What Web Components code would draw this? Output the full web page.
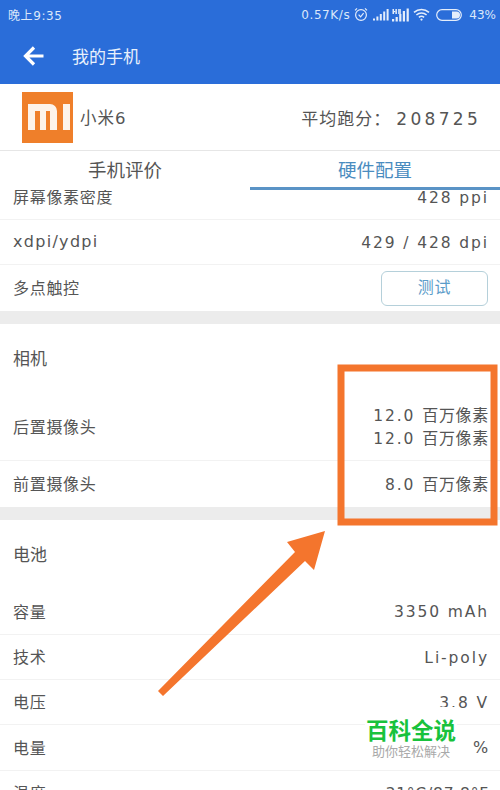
<!DOCTYPE html>
<html lang="zh">
<head>
<meta charset="utf-8">
<title>我的手机</title>
<style>
  html, body { margin: 0; padding: 0; background: #fff; }
  body { width: 500px; height: 790px; overflow: hidden; font-family: "DejaVu Sans", "Noto Sans CJK SC", sans-serif; color: #555; }
</style>
</head>
<body>
<phone-screen>
  <status-bar></status-bar>
  <app-bar>我的手机</app-bar>
  <device-head name="小米6" score="平均跑分&#xFF1A;" points="208725"></device-head>
  <tab-bar first="手机评价" second="硬件配置"></tab-bar>
  <spec-list>
    <spec-row style="height:45px;margin-top:-15px" label="屏幕像素密度"><wide-num>428 ppi</wide-num></spec-row>
    <spec-row style="height:45px" label="xdpi/ydpi" latin><wide-num>429 / 428 dpi</wide-num></spec-row>
    <spec-row style="height:46px" label="多点触控" plain><test-button>测试</test-button></spec-row>
    <spec-gap></spec-gap>
    <spec-title>相机</spec-title>
    <spec-row style="height:68px" label="后置摄像头"><wide-num>12.0 </wide-num>百万像素<br><wide-num>12.0 </wide-num>百万像素</spec-row>
    <spec-row style="height:46px" label="前置摄像头" plain><wide-num>8.0 </wide-num>百万像素</spec-row>
    <spec-gap></spec-gap>
    <spec-title>电池</spec-title>
    <spec-row style="height:46px" label="容量"><wide-num>3350 mAh</wide-num></spec-row>
    <spec-row style="height:45px" label="技术"><wide-num>Li-poly</wide-num></spec-row>
    <spec-row style="height:45px" label="电压"><wide-num>3.8 V</wide-num></spec-row>
    <spec-row style="height:46px" label="电量">%</spec-row>
    <spec-row style="height:45px" label="温度"><wide-num style="letter-spacing:.8px">31°C/87.8°F</wide-num></spec-row>
  </spec-list>
  <photo-annotation></photo-annotation>
  <brand-mark></brand-mark>
</phone-screen>

<script>
"use strict";
(() => {
  var BaseControl = class extends HTMLElement {
    constructor() {
      super();
      this.shadow = this.attachShadow({ mode: "open" });
    }
    connectedCallback() {
      this.render();
    }
    render() {
    }
  };

  var PhoneScreen = class extends BaseControl {
    render() {
      this.shadow.innerHTML = `
      <style>
        :host { display: flex; flex-direction: column; position: relative; width: 500px; height: 790px; overflow: hidden; background: #fff; }
      </style>
      <slot></slot>`;
    }
  };

  var StatusBar = class extends BaseControl {
    render() {
      this.shadow.innerHTML = `
      <style>
        :host { display: flex; align-items: center; justify-content: space-between; height: 29px; padding: 0 4px 0 8px; background: #2a6dd9; color: #dbe7fa; font-size: 12px; flex: none; }
        .right { display: flex; align-items: center; gap: 4px; }
        svg { display: block; }
        .time { letter-spacing: .6px; }
        .speed { letter-spacing: .6px; }
        .pct { margin-left: 3px; }
      </style>
      <span class="time">晚上9:35</span>
      <div class="right">
        <span class="speed">0.57K/s</span>
        <svg width="14" height="15" viewBox="0 0 14 15" fill="none" stroke="#e4edfb" stroke-width="1.2"><circle cx="7" cy="8" r="5.4"/><path d="M4.6 7.6 6.6 9.8 9.6 6.2M1 3.4 3 1.4M13 3.4 11 1.4"/></svg>
        <svg width="16" height="12" viewBox="0 0 16 12" fill="#e4edfb" style="margin-left:1px"><rect x="0" y="9.5" width="2" height="2"/><rect x="3.4" y="7.5" width="2" height="4"/><rect x="6.8" y="5" width="2" height="6.5"/><rect x="10.2" y="2.5" width="2" height="9"/><rect x="13.6" y="0" width="2" height="11.5"/></svg>
        <svg width="18" height="14" viewBox="0 0 18 14" fill="#e4edfb" style="margin-left:-1px"><rect x="0" y="11" width="2.2" height="2.5"/><rect x="3.6" y="9" width="2.2" height="4.5"/><rect x="7.2" y="6" width="2.2" height="7.5"/><rect x="10.8" y="3" width="2.2" height="10.5"/><rect x="14.6" y="0.5" width="2.2" height="13"/><rect x="0.5" y="1" width="1.5" height="5"/><rect x="3.4" y="1" width="1.5" height="5"/><rect x="2" y="3" width="1.4" height="1.2"/><rect x="6" y="1" width="3" height="5" opacity=".8"/></svg>
        <svg width="17" height="13" viewBox="0 0 17 13" fill="none" stroke="#e4edfb" stroke-width="1.6" style="margin-left:-1px"><path d="M1 4.4C5.3.6 11.700.6 16 4.4M3.4 7C6.3 4.4 10.700 4.4 13.600 7M5.900 9.400C7.300 8.200 9.700 8.200 11.100 9.400"/><circle cx="8.500" cy="11.600" r="1.100" fill="#e4edfb" stroke="none"/></svg>
        <svg width="26" height="12" viewBox="0 0 26 12" fill="none" style="margin-left:2px"><rect x=".7" y=".7" width="24.600" height="10.600" rx="5.300" stroke="#e4edfb" stroke-width="1.2"/><path d="M16 2.500h4.500a3.500 3.500 0 0 1 0 7H16z" fill="#e4edfb"/></svg>
        <span class="pct">43%</span>
      </div>`;
    }
  };

  var AppBar = class extends BaseControl {
    render() {
      this.shadow.innerHTML = `
      <style>
        :host { display: flex; align-items: center; gap: 28px; height: 55px; padding-left: 23px; padding-bottom: 2px; box-sizing: border-box; background: #2a6dd9; color: #e8f0fc; font-size: 17px; flex: none; }
        svg { display: block; }
      </style>
      <svg width="21" height="20" viewBox="0 0 21 20" fill="none" stroke="#fff" stroke-width="3.2"><path d="M20.500 10H3M11 1.500 2.500 10l8.500 8.500"/></svg>
      <span><slot></slot></span>`;
    }
  };

  var DeviceHead = class extends BaseControl {
    render() {
      this.shadow.innerHTML = `
      <style>
        :host { display: flex; align-items: center; height: 67px; padding: 0 20px 0 22px; box-sizing: border-box; border-bottom: 1px solid #e6e6e6; background: #fff; flex: none; }
        svg { display: block; margin-right: 7px; flex: none; }
        .name { font-size: 16.500px; letter-spacing: 1px; color: #555; flex: 1; }
        .score { font-size: 17px; letter-spacing: 1px; color: #555; white-space: nowrap; }
        .pts { letter-spacing: 3.300px; margin-left: 5px; margin-right: -1px; }
      </style>
      <svg width="51" height="51" viewBox="0 0 51 51"><rect width="51" height="51" fill="#ef7f2a"/><path fill="#fdf3ea" d="M6 12h22a7 7 0 0 1 7 7v19h-7V19h-4v19h-6V19h-5v19H6zM41 12h7v26h-7z"/></svg>
      <span class="name">${this.getAttribute("name")}</span>
      <span class="score">${this.getAttribute("score")}<span class="pts">${this.getAttribute("points")}</span></span>`;
    }
  };

  var TabBar = class extends BaseControl {
    render() {
      this.shadow.innerHTML = `
      <style>
        :host { display: grid; grid-template-columns: 250px 250px; height: 39px; background: #fff; flex: none; position: relative; z-index: 1; }
        div { display: flex; align-items: center; justify-content: center; font-size: 18.500px; color: #555; padding-bottom: 3px; box-sizing: border-box; }
        .on { color: #4a8cbf; border-bottom: 3px solid #5a93c6; padding-bottom: 0; }
      </style>
      <div>${this.getAttribute("first")}</div>
      <div class="on">${this.getAttribute("second")}</div>`;
    }
  };

  var SpecList = class extends BaseControl {
    render() {
      this.shadow.innerHTML = `
      <style>
        :host { display: flex; flex-direction: column; flex: 1; min-height: 0; overflow: hidden; }
      </style>
      <slot></slot>`;
    }
  };

  var SpecRow = class extends BaseControl {
    render() {
      var line = this.hasAttribute("plain") ? "none" : "1px solid #f2f2f2";
      var track = this.hasAttribute("latin") ? "1.300px" : ".700px";
      this.shadow.innerHTML = `
      <style>
        :host { display: flex; align-items: center; justify-content: space-between; padding: 0 12px 0 13px; box-sizing: border-box; border-bottom: ${line}; font-size: 16px; color: #555; flex: none; }
        .label { letter-spacing: ${track}; margin-bottom: 2px; }
        .value { text-align: right; line-height: 22.500px; letter-spacing: .7px; margin-right: -1px; margin-top: 2px; }
      </style>
      <span class="label">${this.getAttribute("label")}</span>
      <div class="value"><slot></slot></div>`;
    }
  };

  // the digits and latin letters of the reference are set wide
  var WideNum = class extends BaseControl {
    render() {
      this.shadow.innerHTML = `
      <style>
        :host { display: inline; letter-spacing: 1.900px; font-size: 15.500px; }
      </style>
      <slot></slot>`;
    }
  };

  var SpecTitle = class extends BaseControl {
    render() {
      this.shadow.innerHTML = `
      <style>
        :host { display: flex; align-items: center; height: 69px; padding: 0 0 2px 13px; box-sizing: border-box; font-size: 17px; color: #555; flex: none; }
      </style>
      <slot></slot>`;
    }
  };

  var SpecGap = class extends BaseControl {
    render() {
      this.shadow.innerHTML = `
      <style>
        :host { display: block; height: 13px; background: #ececec; flex: none; }
      </style>`;
    }
  };

  var TestButton = class extends BaseControl {
    render() {
      this.shadow.innerHTML = `
      <style>
        :host { display: flex; align-items: center; justify-content: center; width: 105px; height: 33px; margin: -2px 1px 0 0; border: 1px solid #b5d0da; border-radius: 6px; color: #5b9cc9; font-size: 16px; }
      </style>
      <slot></slot>`;
    }
  };

  // orange box and arrow drawn on top of the photo
  var PhotoAnnotation = class extends BaseControl {
    render() {
      this.shadow.innerHTML = `
      <style>
        :host { position: absolute; left: 0; top: 0; width: 500px; height: 790px; pointer-events: none; }
        svg { display: block; }
      </style>
      <svg width="500" height="790" viewBox="0 0 500 790">
        <rect x="341" y="368" width="153" height="154" fill="none" stroke="#f4752d" stroke-width="7"/>
        <polygon fill="#f4752d" points="158,691 295,552 287,542 325,531 314,570 305,561 163,696"/>
      </svg>`;
    }
  };

  var BrandMark = class extends BaseControl {
    render() {
      this.shadow.innerHTML = `
      <style>
        :host { position: absolute; left: 365px; top: 707px; width: 92px; height: 54px; padding-top: 9px; box-sizing: content-box; display: flex; flex-direction: column; align-items: center; background: #fff; font-family: "Noto Sans CJK SC", sans-serif; }
        .big { color: #18c23c; font-size: 22.500px; font-weight: 700; line-height: 27px; white-space: nowrap; }
        .small { color: #a9a9a9; font-size: 13px; line-height: 16px; white-space: nowrap; }
      </style>
      <span class="big">百科全说</span>
      <span class="small">助你轻松解决</span>`;
    }
  };

  customElements.define("phone-screen", PhoneScreen);
  customElements.define("status-bar", StatusBar);
  customElements.define("app-bar", AppBar);
  customElements.define("device-head", DeviceHead);
  customElements.define("tab-bar", TabBar);
  customElements.define("spec-list", SpecList);
  customElements.define("spec-row", SpecRow);
  customElements.define("wide-num", WideNum);
  customElements.define("spec-title", SpecTitle);
  customElements.define("spec-gap", SpecGap);
  customElements.define("test-button", TestButton);
  customElements.define("photo-annotation", PhotoAnnotation);
  customElements.define("brand-mark", BrandMark);
})();
</script>
</body>
</html>
